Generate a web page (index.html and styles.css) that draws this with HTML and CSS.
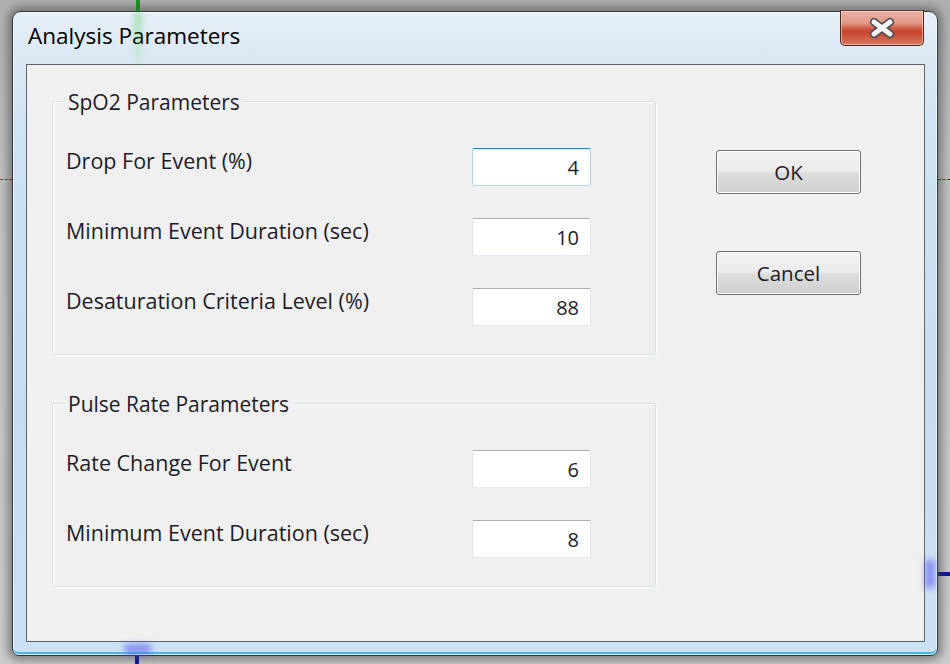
FILE: index.html
```html
<!DOCTYPE html>
<html>
<head>
<meta charset="utf-8">
<link rel="stylesheet" href="styles.css">
</head>
<body>
<div class="bgline green-top"></div>
<div class="bgline red-left"></div>
<div class="bgline red-right"></div>
<div class="bgline blue-bottom"></div>
<div class="bgline blue-right"></div>

<div class="window">
  <div class="glow green-glow"></div>
  <div class="glow blue-glow-bottom"></div>
  <div class="glow blue-glow-right"></div>
  <div class="titlebar">
    <div class="title">Analysis Parameters</div>
    <div class="close">
      <svg width="30" height="20" viewBox="0 0 30 20">
        <path d="M7 4 L23 16 M23 4 L7 16" stroke="#4a4a55" stroke-width="8" stroke-linecap="round" fill="none"/>
        <path d="M7 4 L23 16 M23 4 L7 16" stroke="#f4f4f4" stroke-width="5" stroke-linecap="round" fill="none"/>
      </svg>
    </div>
  </div>
  <div class="client">
    <div class="groups">
      <div class="group">
        <div class="legend">SpO2 Parameters</div>
        <div class="rows">
          <div class="row"><span class="label">Drop For Event (%)</span><div class="input focused">4</div></div>
          <div class="row"><span class="label">Minimum Event Duration (sec)</span><div class="input">10</div></div>
          <div class="row"><span class="label">Desaturation Criteria Level (%)</span><div class="input">88</div></div>
        </div>
      </div>
      <div class="group">
        <div class="legend">Pulse Rate Parameters</div>
        <div class="rows">
          <div class="row"><span class="label">Rate Change For Event</span><div class="input">6</div></div>
          <div class="row"><span class="label">Minimum Event Duration (sec)</span><div class="input">8</div></div>
        </div>
      </div>
    </div>
    <div class="buttons">
      <div class="btn">OK</div>
      <div class="btn">Cancel</div>
    </div>
  </div>
</div>
</body>
</html>
```
FILE: styles.css
```css
html, body {
  margin: 0;
  padding: 0;
}
body {
  width: 950px;
  height: 664px;
  overflow: hidden;
  position: relative;
  background: linear-gradient(180deg, #b0b0b0 0%, #c4c4c4 30%, #cdcdcd 100%);
  font-family: "Open Sans", "Noto Sans", "Liberation Sans", sans-serif;
  color: #1c1c28;
}
.bgline { position: absolute; }
.green-top { left: 136px; top: 0; width: 4px; height: 14px; background: #1aa01a; }
.red-left { left: 0; top: 179px; width: 12px; height: 0; border-top: 1px dashed #a02828; }
.red-right { left: 938px; top: 179px; width: 12px; height: 0; border-top: 1px dashed #a02828; }
.blue-bottom { left: 135px; top: 652px; width: 4px; height: 12px; background: #10109a; }
.blue-right { left: 934px; top: 572px; width: 16px; height: 4px; background: #10109a; }

.window {
  position: relative;
  margin: 11px 0 0 12px;
  width: 924px;
  height: 643px;
  border: 1px solid #2c3a44;
  border-radius: 9px 9px 7px 7px;
  background: linear-gradient(180deg, #e6eff7 0px, #dce9f4 40px, #cfe3f3 120px, #c5ddf1 400px, #c9e2f6 100%);
  box-shadow: 0 0 10px 4px rgba(60, 60, 60, 0.55), inset 0 0 0 1px rgba(255,255,255,0.7), inset 0 -3px 0 #4fb6dd;
  display: flex;
  flex-direction: column;
}
.glow { position: absolute; pointer-events: none; }
.green-glow { left: 122px; top: 0; width: 6px; height: 52px; background: linear-gradient(180deg, rgba(40,190,40,0.45), rgba(40,190,40,0.05)); filter: blur(3px); }
.blue-glow-bottom { left: 112px; top: 632px; width: 26px; height: 10px; background: rgba(80, 80, 240, 0.55); filter: blur(3px); }
.blue-glow-right { left: 912px; top: 548px; width: 10px; height: 28px; background: rgba(80, 80, 240, 0.55); filter: blur(3px); }

.titlebar {
  height: 52px;
  display: flex;
  justify-content: space-between;
  align-items: flex-start;
}
.title {
  padding: 9px 0 0 15px;
  font-size: 22.5px;
  line-height: 30px;
  color: #000;
}
.close {
  margin: -2px 13px 0 0;
  width: 82px;
  height: 34px;
  border: 1px solid #4a2a26;
  border-top-color: #6a3a34;
  border-radius: 0 0 5px 5px;
  background: linear-gradient(180deg, #eab2a6 0%, #e19a88 35%, #cd5a40 52%, #c5452c 62%, #d57b62 100%);
  box-shadow: inset 0 0 0 1px rgba(255, 220, 210, 0.55);
  display: flex;
  align-items: center;
  justify-content: center;
}
.client {
  margin: 0 12px 0 13px;
  width: 897px;
  height: 576px;
  border: 1px solid #5e646a;
  background: #f0f0f0;
  display: flex;
  align-items: flex-start;
}
.groups {
  margin: 36px 0 0 25px;
  width: 604px;
  display: flex;
  flex-direction: column;
  gap: 48px;
}
.group {
  border: 1px solid #d5dfe5;
  border-radius: 3px;
  box-shadow: inset 1px 1px 0 #ffffff, 1px 1px 0 #ffffff;
  padding: 0 0 28px 13px;
}
.legend {
  width: fit-content;
  margin: -14px 0 0 -1px;
  padding: 0 3px 0 3px;
  background: #f0f0f0;
  font-size: 21px;
  line-height: 28px;
  height: 28px;
}
.rows {
  margin-top: 32px;
  display: flex;
  flex-direction: column;
  gap: 32px;
}
.row {
  display: flex;
  align-items: flex-start;
  height: 38px;
}
.label {
  width: 406px;
  font-size: 21.5px;
  line-height: 26px;
}
.input {
  box-sizing: border-box;
  width: 119px;
  height: 38px;
  background: #fff;
  border: 1px solid #e2e3ea;
  border-top-color: #abadb3;
  border-bottom-color: #e3e9ef;
  border-radius: 2px;
  text-align: right;
  padding: 0 11px 0 0;
  font-size: 20px;
  line-height: 38px;
}
.input.focused {
  border-color: #b5cfe7;
  border-top-color: #3d7bad;
  border-bottom-color: #b7d9ed;
  box-shadow: inset 0 1px 0 #e0ecf7;
}
.buttons {
  margin: 85px 0 0 60px;
  display: flex;
  flex-direction: column;
  gap: 57px;
}
.btn {
  box-sizing: border-box;
  width: 145px;
  height: 44px;
  border: 1px solid #707070;
  border-radius: 3px;
  background: linear-gradient(180deg, #f2f2f2 0%, #ebebeb 48%, #dddddd 52%, #cfcfcf 100%);
  box-shadow: inset 0 0 0 1px #fcfcfc;
  text-align: center;
  font-size: 20.5px;
  line-height: 42px;
}
```
